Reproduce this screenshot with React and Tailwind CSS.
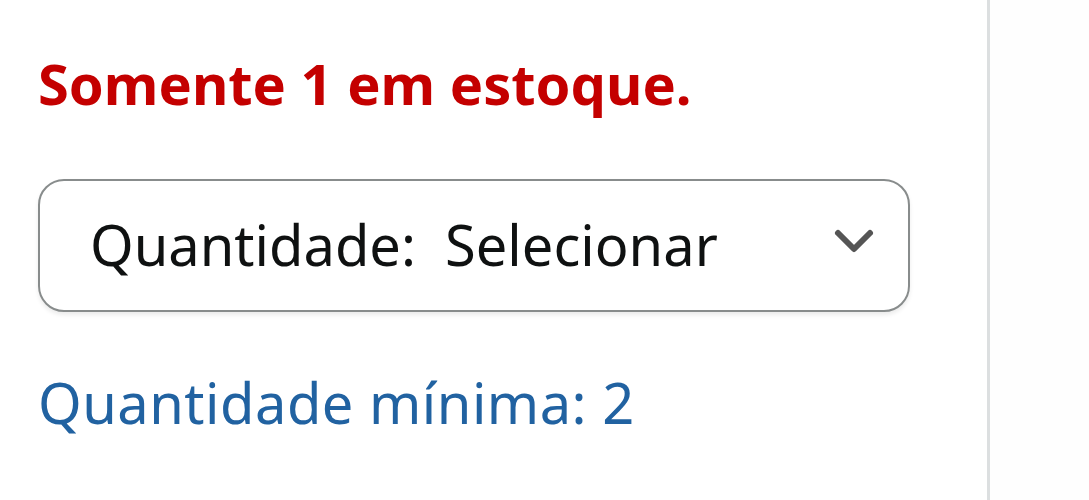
export default function App() {
  return (
    <div className="w-[1089px] h-[500px] bg-white flex" style={{ fontFamily: '"Noto Sans", "Open Sans", sans-serif' }}>
      <div className="w-[987px] pl-[38px] pt-[47px] flex flex-col">
        <div className="text-[#c40000] font-bold text-[56px] leading-[72px]">Somente 1 em estoque.</div>
        <div className="mt-[60px] w-[872px] h-[133px] border-[2px] border-[#888c8c] rounded-[26px] flex items-center pl-[50px] pr-[32px] shadow-[0_3px_4px_rgba(15,17,17,0.08)]">
          <span className="text-[#0f1111] text-[56px] leading-[76px] flex-1 -mt-[4px]">Quantidade:&nbsp; Selecionar</span>
          <svg width="44" height="30" viewBox="0 0 44 30" className="-mt-[8px]">
            <path d="M6 6 L22 22 L38 6" fill="none" stroke="#555" strokeWidth="6" strokeLinecap="round" strokeLinejoin="round" />
          </svg>
        </div>
        <div className="mt-[54px] text-[#2162a1] text-[56px] leading-[72px] tracking-[0.5px]">Quantidade mínima: 2</div>
      </div>
      <div className="w-[3px] h-full bg-[#dcdfe0]" />
      <div className="flex-1 bg-[#fefefe]" />
    </div>
  );
}
